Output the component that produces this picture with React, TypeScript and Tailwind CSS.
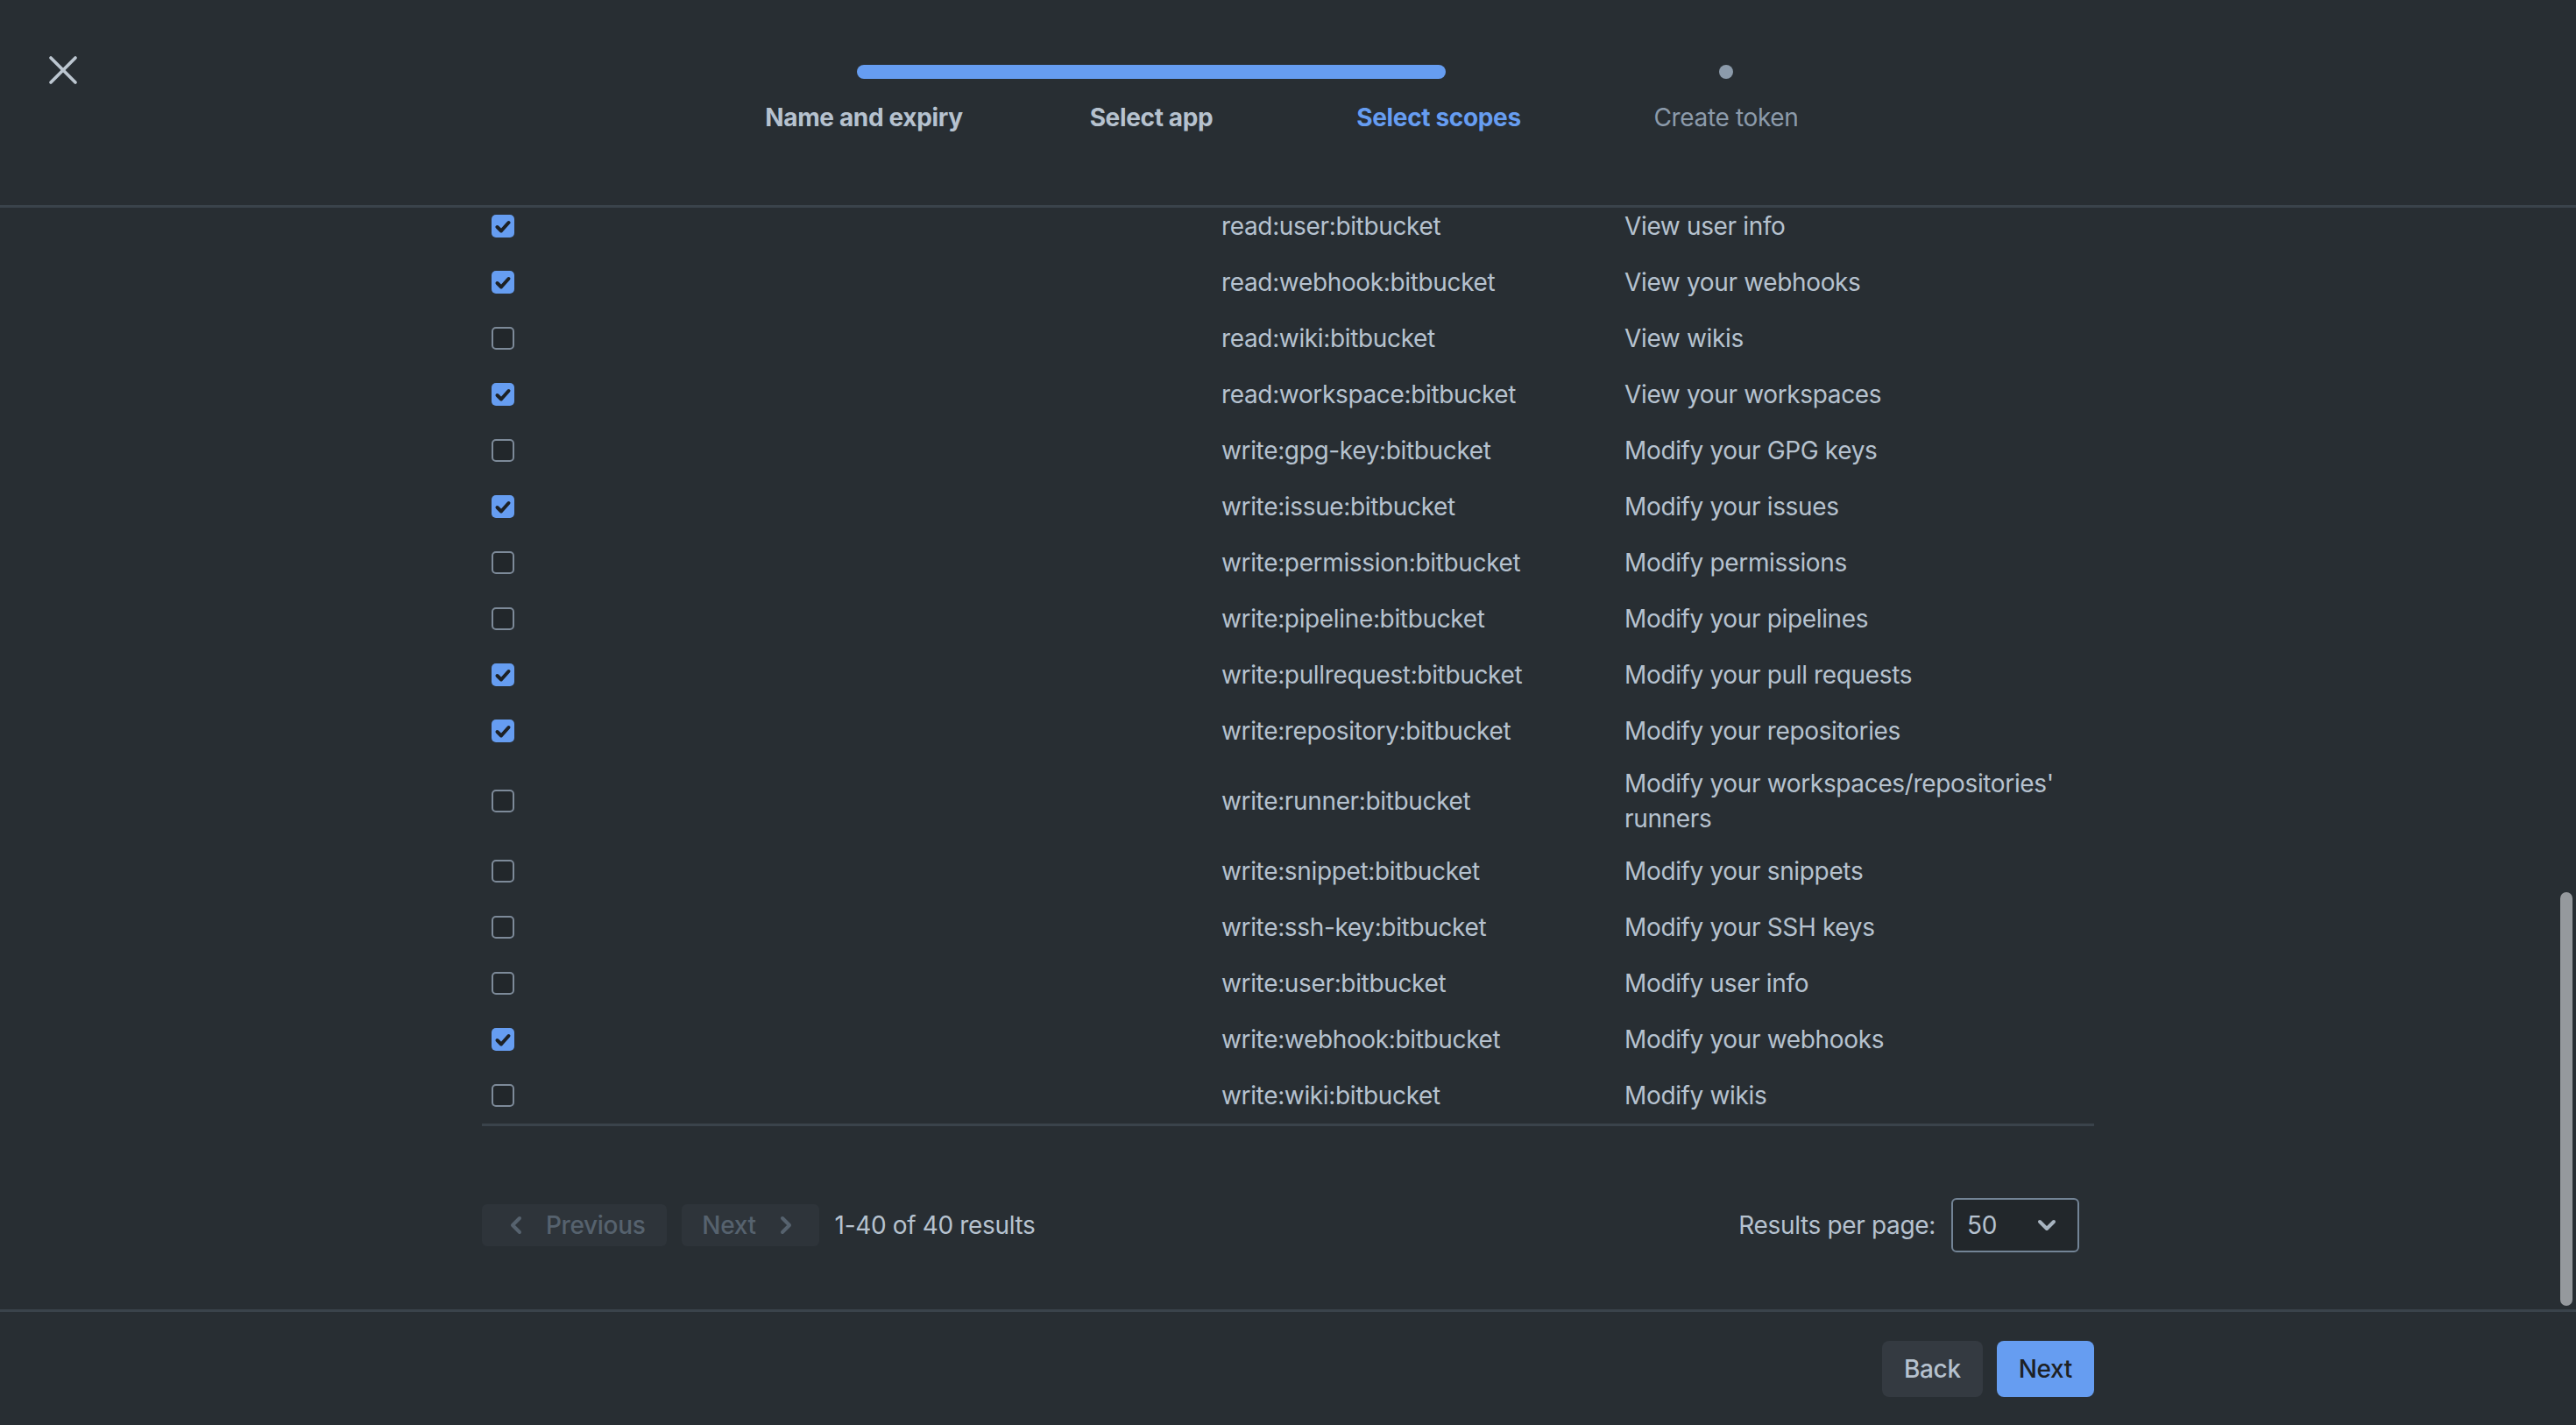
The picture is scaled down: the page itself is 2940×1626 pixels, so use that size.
import { X, ChevronLeft, ChevronRight, ChevronDown } from 'lucide-react';

interface Scope {
  name: string;
  description: string;
  checked: boolean;
}

const scopes: Scope[] = [
  { name: 'read:user:bitbucket', description: 'View user info', checked: true },
  { name: 'read:webhook:bitbucket', description: 'View your webhooks', checked: true },
  { name: 'read:wiki:bitbucket', description: 'View wikis', checked: false },
  { name: 'read:workspace:bitbucket', description: 'View your workspaces', checked: true },
  { name: 'write:gpg-key:bitbucket', description: 'Modify your GPG keys', checked: false },
  { name: 'write:issue:bitbucket', description: 'Modify your issues', checked: true },
  { name: 'write:permission:bitbucket', description: 'Modify permissions', checked: false },
  { name: 'write:pipeline:bitbucket', description: 'Modify your pipelines', checked: false },
  { name: 'write:pullrequest:bitbucket', description: 'Modify your pull requests', checked: true },
  { name: 'write:repository:bitbucket', description: 'Modify your repositories', checked: true },
  { name: 'write:runner:bitbucket', description: "Modify your workspaces/repositories' runners", checked: false },
  { name: 'write:snippet:bitbucket', description: 'Modify your snippets', checked: false },
  { name: 'write:ssh-key:bitbucket', description: 'Modify your SSH keys', checked: false },
  { name: 'write:user:bitbucket', description: 'Modify user info', checked: false },
  { name: 'write:webhook:bitbucket', description: 'Modify your webhooks', checked: true },
  { name: 'write:wiki:bitbucket', description: 'Modify wikis', checked: false },
];

const steps = [
  { label: 'Name and expiry', state: 'done' },
  { label: 'Select app', state: 'done' },
  { label: 'Select scopes', state: 'current' },
  { label: 'Create token', state: 'todo' },
];

function Checkbox({ checked }: { checked: boolean }) {
  if (checked) {
    return (
      <span className="flex h-[26px] w-[26px] items-center justify-center rounded-[5px] bg-[#669df1]">
        <svg width="26" height="26" viewBox="0 0 26 26" fill="none">
          <path d="M6.5 14 L11 18.5 L19.5 9" stroke="#1d2125" strokeWidth="4" strokeLinecap="round" strokeLinejoin="round" />
        </svg>
      </span>
    );
  }
  return <span className="block h-[26px] w-[26px] rounded-[5px] border-2 border-[#7d8a99] bg-[#22272b]" />;
}

export default function App() {
  return (
    <div className="flex h-[1626px] w-[2940px] flex-col overflow-hidden bg-[#282e33] font-['Inter',sans-serif] text-[28px] leading-[40px] tracking-[-0.35px] text-[#b6c2cf]">
      {/* header with stepper */}
      <header className="grid h-[237px] shrink-0 grid-cols-[1fr_auto_1fr] border-b-[3px] border-[#3a434b]">
        <div>
          <button className="ml-[44px] mt-[52px] flex h-[56px] w-[56px] items-center justify-center text-[#bcc6d0]">
            <X size={56} strokeWidth={1.6} />
          </button>
        </div>
        <div className="pl-[16px] pt-[74px]">
          <div className="w-[1312px]">
            <div className="flex h-[16px] items-center pl-[156px]">
              <div className="h-[16px] w-[672px] rounded-full bg-[#669df1]" />
              <div className="ml-[312px] h-[16px] w-[16px] rounded-full bg-[#8c9bab]" />
            </div>
            <div className="mt-[24px] grid grid-cols-4 text-center">
              {steps.map((s) => (
                <span
                  key={s.label}
                  className={
                    s.state === 'current'
                      ? 'font-bold text-[#669df1]'
                      : s.state === 'done'
                        ? 'font-bold text-[#b6c2cf]'
                        : 'font-normal text-[#8c9bab]'
                  }
                >
                  {s.label}
                </span>
              ))}
            </div>
          </div>
        </div>
        <div />
      </header>

      {/* scrolling body */}
      <main className="relative flex-1 overflow-hidden">
        <div className="mx-auto mt-[-11px] w-[1840px]">
          <div className="border-b-[3px] border-[#3a434b]">
            {scopes.map((s) => (
              <div key={s.name} className="grid min-h-[64px] grid-cols-[828px_460px_552px] items-center py-[8px]">
                <div className="pl-[11px]">
                  <Checkbox checked={s.checked} />
                </div>
                <div className="px-[16px]">{s.name}</div>
                <div className="px-[16px]">{s.description}</div>
              </div>
            ))}
          </div>

          {/* pagination */}
          <div className="mt-[89px] flex h-[48px] items-center justify-between pr-[17px]">
            <div className="flex items-center gap-[17px]">
              <button className="flex h-[48px] items-center gap-[18px] rounded-[6px] bg-[#2e343a] pl-[23px] pr-[25px] font-medium text-[#56626e]">
                <ChevronLeft size={32} strokeWidth={3} />
                Previous
              </button>
              <button className="flex h-[48px] items-center gap-[18px] rounded-[6px] bg-[#2e343a] pl-[23px] pr-[22px] font-medium text-[#56626e]">
                Next
                <ChevronRight size={32} strokeWidth={3} />
              </button>
              <span className="ml-[1px]">1-40 of 40 results</span>
            </div>
            <div className="flex items-center gap-[18px]">
              <span>Results per page:</span>
              <div className="flex h-[62px] w-[146px] items-center justify-between rounded-[6px] border-2 border-[#738496] bg-[#22272b] pl-[16px] pr-[19px]">
                <span>50</span>
                <ChevronDown size={32} strokeWidth={3} className="text-[#a8b4c0]" />
              </div>
            </div>
          </div>
        </div>

        {/* overlay scrollbar thumb */}
        <div className="absolute bottom-[4px] right-[4px] h-[472px] w-[14px] rounded-full bg-[#95999d]" />
      </main>

      {/* footer */}
      <footer className="h-[132px] shrink-0 border-t-[3px] border-[#3a434b]">
        <div className="mx-auto flex h-full w-[1840px] items-center justify-end gap-[16px]">
          <button className="h-[64px] rounded-[8px] bg-[#343a41] px-[25px] font-medium text-[#b6c2cf]">Back</button>
          <button className="h-[64px] rounded-[8px] bg-[#669df1] px-[25px] font-medium text-[#1d2125]">Next</button>
        </div>
      </footer>
    </div>
  );
}
